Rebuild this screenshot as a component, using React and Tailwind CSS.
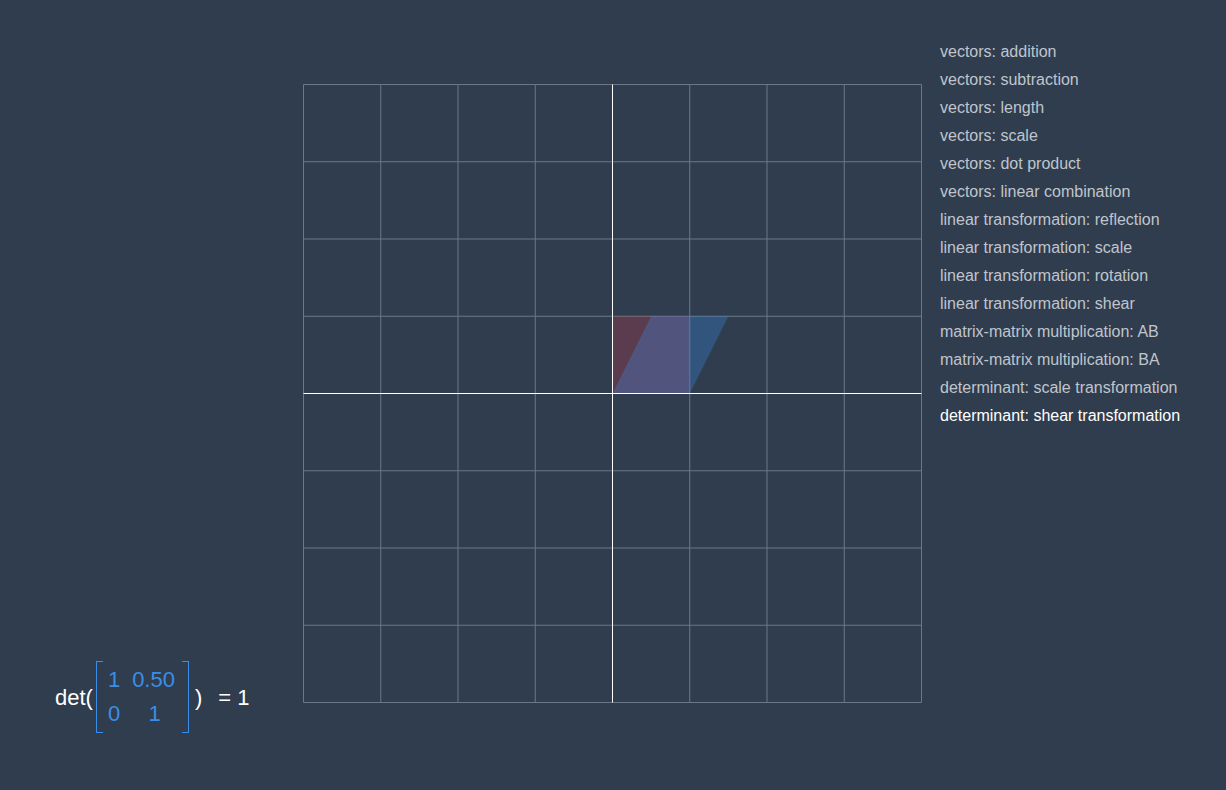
export default function App(){
const items=["vectors: addition","vectors: subtraction","vectors: length","vectors: scale","vectors: dot product","vectors: linear combination","linear transformation: reflection","linear transformation: scale","linear transformation: rotation","linear transformation: shear","matrix-matrix multiplication: AB","matrix-matrix multiplication: BA","determinant: scale transformation","determinant: shear transformation"];
const s=618/8;
const lines=[];
for(let i=0;i<=8;i++){const p=i*s; if(i!==4){lines.push(<line key={'v'+i} x1={p} y1={0} x2={p} y2={618} stroke="#6b7886" strokeWidth="1"/>);lines.push(<line key={'h'+i} x1={0} y1={p} x2={618} y2={p} stroke="#6b7886" strokeWidth="1"/>);}}
return(<div className="w-[1226px] h-[790px] bg-[#2f3d4f] flex" style={{fontFamily:'"Liberation Sans", Arial, sans-serif'}}>
<div className="w-[303px] flex flex-col justify-end pb-[57px] pl-[55px]">
<div className="flex items-center text-white text-[22px] h-[72px]">
<span>det(</span>
<div className="relative ml-[3px] w-[93px] h-[72px] border border-[#3b8ee8] border-l-[1.5px] border-r-[1.5px] text-[#3b8ee8] grid grid-cols-[auto_auto] gap-x-[10px] px-[11px] content-center">
<div className="absolute left-[6px] right-[6px] top-[-1px] bottom-[-1px] bg-[#2f3d4f]"/>
<span className="relative">1</span><span className="relative">0.50</span>
<span className="relative leading-[36px]">0</span><span className="relative text-center leading-[36px]">1</span>
</div>
<span className="ml-[6px]">)</span>
<span className="ml-[16px]">= 1</span>
</div>
</div>
<div className="pt-[84px]">
<svg width="619" height="619" viewBox="-0.5 -0.5 619 619">
{lines}
<rect x={309} y={231.75} width={77.25} height={77.25} fill="#e03c4b" fillOpacity="0.25"/>
<polygon points={`309,309 386.25,309 424.9,231.75 347.6,231.75`} fill="#3b8ee8" fillOpacity="0.3"/>
<line x1={309} y1={0} x2={309} y2={618} stroke="#fff" strokeWidth="1"/>
<line x1={0} y1={309} x2={618} y2={309} stroke="#fff" strokeWidth="1"/>
</svg>
</div>
<div className="pl-[18px] pt-[38px] flex flex-col text-[16px]">
{items.map((t,i)=><div key={i} className={"leading-[28px] "+(i===13?"text-white":"text-[#c0c5cc]")}>{t}</div>)}
</div>
</div>);}
